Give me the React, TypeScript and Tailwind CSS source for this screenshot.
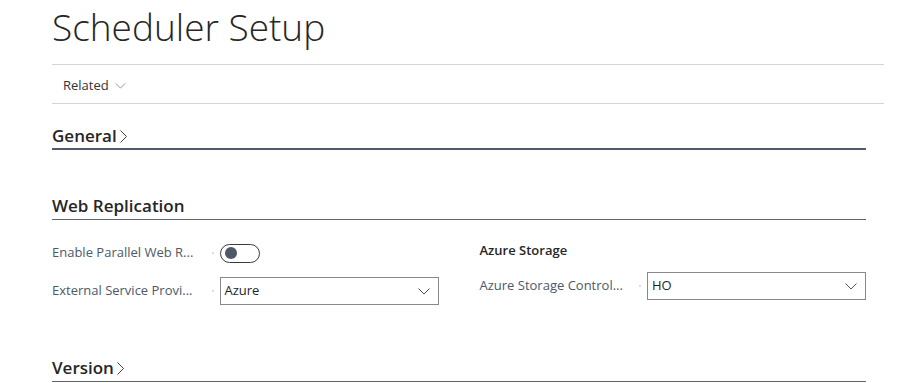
import React from "react";

const font = { fontFamily: "'Open Sans', 'Noto Sans', sans-serif" };

function ChevronDown({ className = "" }: { className?: string }) {
  return (
    <svg viewBox="0 0 12 7" className={className} fill="none" aria-hidden="true">
      <path d="M0.5 0.5 L6 6 L11.5 0.5" stroke="currentColor" strokeWidth="1" />
    </svg>
  );
}

function ChevronRight({ className = "" }: { className?: string }) {
  return (
    <svg viewBox="0 0 7 13" className={className} fill="none" aria-hidden="true">
      <path d="M0.5 0.5 L6.5 6.5 L0.5 12.5" stroke="currentColor" strokeWidth="1" />
    </svg>
  );
}

function SectionHeader({ title, chevron, thick, className = "" }: { title: string; chevron?: boolean; thick?: boolean; className?: string }) {
  return (
    <div
      className={`flex items-end h-[26px] ${thick ? "border-b-2 border-[#505a6a] pb-[1px]" : "border-b border-[#5f6570] pb-[2px]"} ${className}`}
    >
      <span className="text-[17px] leading-[22px] font-semibold text-[#262626]">{title}</span>
      {chevron && <ChevronRight className="w-[7px] h-[13px] ml-[3px] mb-[4px] text-[#444]" />}
    </div>
  );
}

function Dot() {
  return <span className="w-[2px] h-[2px] rounded-full bg-[#d0d0d0] mr-[6px]" />;
}

function Select({ value }: { value: string }) {
  return (
    <div className="w-[219px] h-[28px] border border-[#8a8886] flex items-center pl-[4px] pr-[8px] justify-between">
      <span className="text-[13px] text-[#1f1f1f]">{value}</span>
      <ChevronDown className="w-[12px] h-[7px] text-[#555]" />
    </div>
  );
}

export default function App() {
  return (
    <div className="bg-white w-[897px] h-[383px] overflow-hidden pl-[52px]" style={font}>
      {/* Title */}
      <div className="h-[64px] w-[832px]">
        <h1 className="text-[37px] font-light leading-[52px] text-[#262626] pt-[1px]">Scheduler Setup</h1>
      </div>

      {/* Action bar */}
      <div className="h-[40px] w-[832px] border-t border-b border-[#d4d4d4] flex items-center pl-[11px] pt-[3px]">
        <span className="text-[13px] text-[#333]">Related</span>
        <ChevronDown className="w-[11px] h-[6px] ml-[6px] text-[#888]" />
      </div>

      <div className="w-[814px]">
        <SectionHeader title="General" chevron thick className="mt-[20px]" />

        <SectionHeader title="Web Replication" className="mt-[44px]" />

        <div className="grid grid-cols-2 gap-x-[41px]">
          <div className="flex flex-col gap-[10px] pt-[19px]">
            <div className="flex items-center h-[28px]">
              <span className="flex-1 text-[13px] text-[#4d5868] whitespace-nowrap">Enable Parallel Web R...</span>
              <Dot />
              <div className="w-[219px] flex items-center">
                <div className="w-[40px] h-[19px] rounded-full border border-[#3b3b3b] flex items-center pl-[4px]">
                  <span className="w-[12px] h-[12px] rounded-full bg-[#4f5868]" />
                </div>
              </div>
            </div>
            <div className="flex items-center h-[28px]">
              <span className="flex-1 text-[13px] text-[#4d5868] whitespace-nowrap">External Service Provi...</span>
              <Dot />
              <Select value="Azure" />
            </div>
          </div>

          <div className="flex flex-col gap-[11px] pt-[21px]">
            <div className="h-[20px] flex items-center text-[13px] font-semibold text-[#262626]">Azure Storage</div>
            <div className="flex items-center h-[28px]">
              <span className="flex-1 text-[13px] text-[#4d5868] whitespace-nowrap">Azure Storage Control...</span>
              <Dot />
              <Select value="HO" />
            </div>
          </div>
        </div>

        <SectionHeader title="Version" chevron className="mt-[51px]" />
      </div>
    </div>
  );
}
